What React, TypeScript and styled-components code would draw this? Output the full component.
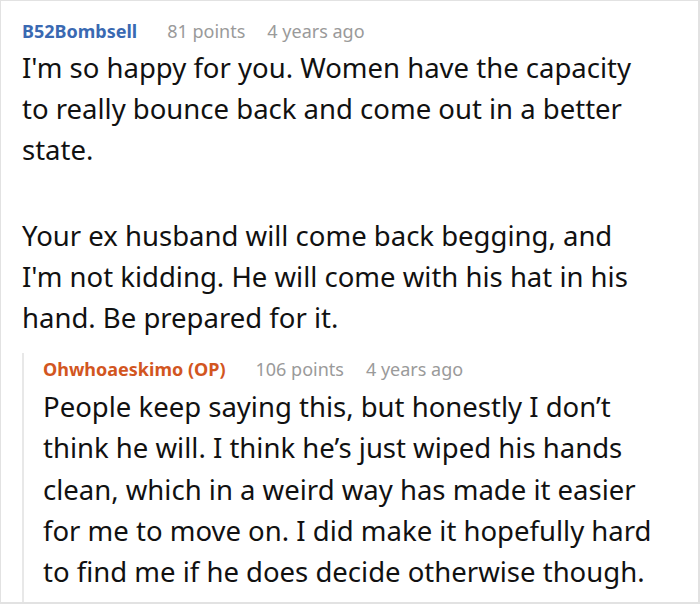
import { FC } from "react";
import styled, { createGlobalStyle } from "styled-components";

interface CommentType {
	author: string;
	op?: boolean;
	points: number;
	age: string;
	paragraphs: string[];
	replies?: CommentType[];
}

const thread: CommentType = {
	author: "B52Bombsell",
	points: 81,
	age: "4 years ago",
	paragraphs: [
		"I'm so happy for you. Women have the capacity to really bounce back and come out in a better state.",
		"Your ex husband will come back begging, and I'm not kidding. He will come with his hat in his hand. Be prepared for it.",
	],
	replies: [
		{
			author: "Ohwhoaeskimo (OP)",
			op: true,
			points: 106,
			age: "4 years ago",
			paragraphs: [
				"People keep saying this, but honestly I don\u2019t think he will. I think he\u2019s just wiped his hands clean, which in a weird way has made it easier for me to move on. I did make it hopefully hard to find me if he does decide otherwise though.",
			],
		},
	],
};

const Comment: FC<{ comment: CommentType; nested?: boolean }> = ({ comment, nested }) => (
	<CommentWrapper $nested={nested}>
		<Meta>
			<Author $op={comment.op}>{comment.author}</Author>
			<Info>{comment.points} points</Info>
			<Info>{comment.age}</Info>
		</Meta>
		<Body $nested={nested}>
			{comment.paragraphs.map((p, i) => (
				<p key={i}>{p}</p>
			))}
		</Body>
		{comment.replies?.map((r, i) => (
			<Comment key={i} comment={r} nested />
		))}
	</CommentWrapper>
);

export default function App() {
	return (
		<>
			<GlobalStyle />
			<Frame>
				<Comment comment={thread} />
			</Frame>
		</>
	);
}

//style_components
const GlobalStyle = createGlobalStyle`
	html, body {
		margin: 0;
		padding: 0;
		background: #fff;
	}
	body {
		font-family: "Noto Sans", "Open Sans", sans-serif;
	}
`;

const Frame = styled.div`
	box-sizing: border-box;
	width: 700px;
	height: 604px;
	border: 1px solid #e2e2e2;
	border-right-width: 2px;
	border-bottom-width: 2px;
	padding: 14px 0 0 21px;
	overflow: hidden;
`;

const CommentWrapper = styled.div<{ $nested?: boolean }>`
	${(p) =>
		p.$nested
			? `
		margin-top: 15px;
		border-left: 2px solid #e8e8e8;
		padding-left: 19px;
		padding-bottom: 10px;
	`
			: ""}
`;

const Meta = styled.div`
	display: flex;
	align-items: baseline;
	gap: 30px;
	font-size: 18px;
	line-height: 32px;
	span + span + span {
		margin-left: -8px;
	}
`;

const Author = styled.span<{ $op?: boolean }>`
	font-weight: 700;
	color: ${(p) => (p.$op ? "#d2561f" : "#3a69b2")};
`;

const Info = styled.span`
	color: #9a9a9a;
`;

const Body = styled.div<{ $nested?: boolean }>`
	color: #111;
	font-size: 27.5px;
	line-height: 41.2px;
	width: ${(p) => (p.$nested ? 630 : 625)}px;
	padding-top: ${(p) => (p.$nested ? 1 : 0)}px;
	p {
		margin: 0;
	}
	p + p {
		margin-top: 44px;
	}
`;
